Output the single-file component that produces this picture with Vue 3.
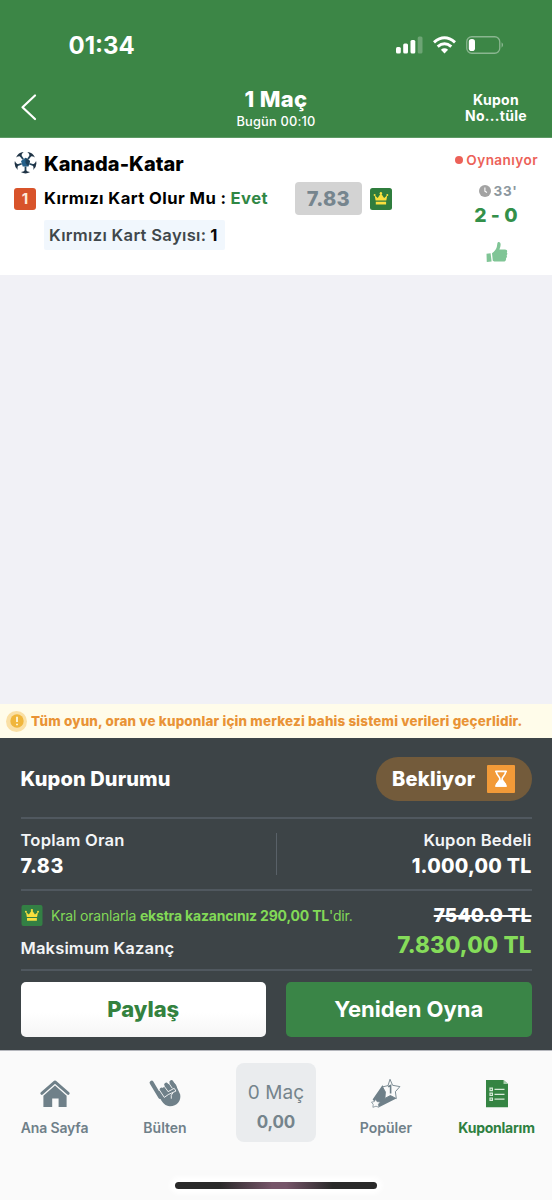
<script setup>
const tabs = [
  { id: 'home', label: 'Ana Sayfa' },
  { id: 'bulletin', label: 'Bülten' },
]
const ballArms = [0, 72, 144, 216, 288]
</script>

<template>
  <div class="app">
    <header class="top">
      <div class="status">
        <span class="time">01:34</span>
        <span class="signals">
          <svg width="27" height="18" viewBox="0 0 27 18" fill="#fff">
            <rect x="0" y="11" width="4.8" height="6.5" rx="1.5" />
            <rect x="7.2" y="7.5" width="4.8" height="10" rx="1.5" />
            <rect x="14.5" y="4" width="4.8" height="13.5" rx="1.5" />
            <rect x="21.7" y="0.5" width="4.8" height="17" rx="1.5" opacity=".25" />
          </svg>
          <svg width="23" height="18" viewBox="0 0 23 18" fill="none" stroke="#fff" stroke-width="3">
            <path d="M1 6.3Q11.5-2.9 22 6.3" />
            <path d="M4.7 10.6Q11.5 4.8 18.3 10.6" />
            <path d="M7.9 13.7Q11.5 10.9 15.1 13.7L11.5 17.4Z" fill="#fff" stroke="none" />
          </svg>
          <svg width="38" height="18" viewBox="0 0 38 18">
            <rect x=".75" y=".75" width="33" height="16.5" rx="5" fill="none" stroke="#fff" stroke-opacity=".4" stroke-width="1.3" />
            <rect x="2.8" y="3" width="6.2" height="12" rx="2.8" fill="#fff" />
            <path d="M35.6 6.3Q38.3 9 35.6 11.7Z" fill="#fff" opacity=".45" />
          </svg>
        </span>
      </div>
      <div class="bar">
        <svg class="back" width="18" height="28" viewBox="0 0 18 28" fill="none" stroke="#fff" stroke-width="2.2" stroke-linecap="round" stroke-linejoin="round">
          <path d="M15 2.5 2.5 14.2 15 26" />
        </svg>
        <div class="titles">
          <h1>1 Maç</h1>
          <p>Bugün 00:10</p>
        </div>
        <div class="coupon"><span>Kupon</span><span>No...tüle</span></div>
      </div>
    </header>

    <section class="match">
      <div class="left">
        <div class="teams">
          <svg width="23" height="23" viewBox="0 0 23 23">
            <path d="M11.5 6.8 16 10.1 14.3 15.4H8.7L7 10.1Z" fill="#24608a" />
            <path d="M11.5 6.8 16 10.1 14.3 15.4 11.5 12Z" fill="#1d3f58" />
            <g v-for="a in ballArms" :key="a" :transform="`rotate(${a + 36} 11.5 11.5)`">
              <path d="M11.5 7.5V2.4" stroke="#24445b" stroke-width="1.8" />
              <path d="M6.8 1.9Q11.5-1 16.2 1.9Q13.7 1.8 11.5 4Q9.3 1.8 6.8 1.9Z" fill="#1f3345" />
            </g>
          </svg>
          <h2>Kanada-Katar</h2>
        </div>
        <div class="pick">
          <span class="mbs">1</span>
          <span class="market">Kırmızı Kart Olur Mu :</span>
          <span class="evet">Evet</span>
          <span class="odd">7.83</span>
          <svg class="crown" width="22" height="22" viewBox="0 0 22 22">
            <rect width="22" height="22" rx="2.5" fill="#2f7d3d" />
            <path d="M5.6 12.6 4.6 7.3 7.7 10 10.9 5.3 14.1 10 17.3 7.3 16.3 12.6ZM5.8 13.7H16.1V16.5H5.8Z" fill="#f8df3e" />
            <g fill="#f8df3e"><circle cx="4.6" cy="7" r="1" /><circle cx="10.9" cy="5.3" r="1.2" /><circle cx="17.3" cy="7" r="1" /></g>
          </svg>
        </div>
        <div class="extra"><span>Kırmızı Kart Sayısı:</span><b>1</b></div>
      </div>
      <div class="live">
        <div class="state"><i></i><span>Oynanıyor</span></div>
        <div class="minute">
          <svg width="12" height="12" viewBox="0 0 12 12"><circle cx="6" cy="6" r="6" fill="#a3a3a3" /><path d="M5.9 2.4V6.2L8 7.5" fill="none" stroke="#fff" stroke-width="1.1" /></svg>
          <span>33'</span>
        </div>
        <div class="score">2 - 0</div>
        <svg class="thumb" width="22" height="22" viewBox="0 0 22 22" fill="#80c596">
          <path d="M.5 12.8 4.6 12.3 5.6 20.5.8 21Z" />
          <path d="M6 12.2C8.3 10.6 9.9 8.7 10.8 6L11.4 2.2C11.8.3 14.5.6 14.6 3.1 14.7 5.2 13.9 7 13.4 8.5H19C21 8.5 21.7 10.1 20.8 11.4 21.7 12.3 21.5 13.7 20.6 14.3 21.3 15.3 20.9 16.7 20 17.2 20.4 19.4 19.2 20.6 17.5 20.6H10C8.7 20.6 7.7 20.2 6.8 19.7Z" />
        </svg>
      </div>
    </section>

    <main class="blank"></main>

    <div class="notice">
      <span class="warn"><svg width="14" height="14" viewBox="0 0 14 14"><circle cx="7" cy="7" r="6.7" fill="#f0b63c" /><path d="M7 2.7V7.9M7 9.7V11.3" stroke="#fff8dc" stroke-width="1.8" /></svg></span>
      <span>Tüm oyun, oran ve kuponlar için merkezi bahis sistemi verileri geçerlidir.</span>
    </div>

    <section class="summary">
      <div class="row durum">
        <span class="h">Kupon Durumu</span>
        <span class="pill">
          <span>Bekliyor</span>
          <svg width="28" height="28" viewBox="0 0 28 28">
            <rect width="28" height="28" rx="1" fill="#f29a38" />
            <path d="M8.8 6.4H19.2M9.4 7C9.6 10.8 12.9 11.6 12.9 14S9.8 17.2 9.4 20.8H18.6C18.2 17.2 15.1 16.4 15.1 14S18.4 10.8 18.6 7" fill="none" stroke="#fff" stroke-width="1.7" stroke-linecap="round" />
            <path d="M14 13.3C13.8 16.3 8.6 16.8 8.2 21.7H19.8C19.4 16.8 14.2 16.3 14 13.3Z" fill="#fff" />
          </svg>
        </span>
      </div>
      <div class="row totals">
        <div class="cell"><span class="label">Toplam Oran</span><span class="value rate">7.83</span></div>
        <i class="split"></i>
        <div class="cell end"><span class="label">Kupon Bedeli</span><span class="value">1.000,00 TL</span></div>
      </div>
      <div class="row win">
        <div class="wleft">
          <div class="king">
            <svg width="22" height="21" viewBox="0 0 22 22">
              <rect width="22" height="22" rx="2" fill="#338044" />
              <path d="M5.6 12.6 4.6 7.3 7.7 10 10.9 5.3 14.1 10 17.3 7.3 16.3 12.6ZM5.8 13.7H16.1V16.5H5.8Z" fill="#f8df3e" />
              <g fill="#f8df3e"><circle cx="4.6" cy="7" r="1" /><circle cx="10.9" cy="5.3" r="1.2" /><circle cx="17.3" cy="7" r="1" /></g>
            </svg>
            <p>Kral oranlarla <b>ekstra kazancınız 290,00 TL</b>'dir.</p>
          </div>
          <span class="label max">Maksimum Kazanç</span>
        </div>
        <div class="wright"><span class="old">7540.0 TL</span><span class="new">7.830,00 TL</span></div>
      </div>
      <div class="actions">
        <button class="share">Paylaş</button>
        <button class="again">Yeniden Oyna</button>
      </div>
    </section>

    <nav class="tabs">
      <div class="items">
        <div v-for="t in tabs" :key="t.id" class="tab" :class="t.id">
          <svg v-if="t.id === 'home'" width="32" height="30" viewBox="0 0 32 30" fill="#6f8089">
            <path d="M2.8 15.4 16 3.9 29.2 15.4" fill="none" stroke="#6f8089" stroke-width="2.9" stroke-linejoin="round" stroke-linecap="round" />
            <path d="M16 7.6 27.6 17.8V29H19.6V20.5H13.2V29H4.4V17.8Z" />
          </svg>
          <svg v-else width="34" height="30" viewBox="0 0 34 30">
            <path d="M3.6 4.6 12.2 19" stroke="#6f8089" stroke-width="4" stroke-linecap="round" />
            <path d="M9.3 14.4 14 10.6 18.5 7 24 4.5C27 4.5 28.6 7 29.2 10L32.2 16.5C33.4 23 28.7 28.4 21.8 28.2 17.5 28 14.7 25.2 12.5 21Z" fill="#6f8089" />
            <g stroke="#6f8089" stroke-width="4" stroke-linecap="round"><path d="M13.6 11.6 17.4 16.4M18.2 6.6 22 12M23.4 4.2 26.2 8.5" /></g>
            <path d="M11.2 11.7 16.3 19.4 20.8 16.2M16.2 8.3 20.3 13.8M21.1 5.6 24.3 10.3M20.2 13.6 26.2 10.3 27.9 13.1 20.8 16.3M25.1 14.6Q22.3 16.8 23.3 20.7" fill="none" stroke="#fafafa" stroke-width=".9" />
          </svg>
          <span>{{ t.label }}</span>
        </div>
        <div class="slip"><span class="count">0 Maç</span><span class="sum">0,00</span></div>
        <div class="tab popular">
          <svg width="32" height="30" viewBox="0 0 32 30">
            <path d="M2.6 21.5 12.4 7.2 18 14 26.3 20.6 9.5 29Z" fill="#6f8089" />
            <path d="M20 1.3 22.6 7.3 29.9 8.6 25.4 13.7 26.3 20.6 20.4 17.5 14.9 20.4 15.4 14 12.6 8.9 18 7.6Z" fill="#fafafa" stroke="#6f8089" stroke-width=".9" />
            <path d="M18.2 8.8 20.6 7.5V15.4" fill="none" stroke="#6f8089" stroke-width="1.6" />
            <path d="M5.6 21.2 7 23.6 10.3 24.1 8.4 26.3 8.9 29.3 6 28.2 2.9 29.3 3.2 26.4 1.5 24.1 4.3 23.6Z" fill="#fafafa" stroke="#6f8089" stroke-width=".7" />
          </svg>
          <span>Popüler</span>
        </div>
        <div class="tab mine">
          <svg width="24" height="30" viewBox="0 0 24 30">
            <path d="M1 2H18.5L23 6V29.3H1Z" fill="#358443" />
            <path d="M18.5 2V6H23" fill="#a7cfad" />
            <g fill="none" stroke="#d8ead9" stroke-width="1.2"><path d="M5 10.2H7.4V12.6H5ZM5 15.1H7.4V17.5H5ZM5 20H7.4V22.4H5ZM9.5 11.4H19.5M9.5 16.3H19.5M9.5 21.2H19.5" /></g>
          </svg>
          <span>Kuponlarım</span>
        </div>
      </div>
      <i class="indicator"></i>
    </nav>
  </div>
</template>

<style>
body { margin: 0; background: #f1f1f6; }
</style>

<style scoped>
* { box-sizing: border-box; }
h1, h2, p { margin: 0; }
svg { display: block; flex: none; }
.app {
  display: flex; flex-direction: column; width: 552px; height: 1200px; overflow: hidden;
  font-family: Inter, "Noto Sans", sans-serif; background: #f1f1f6; white-space: nowrap;
}

.top { height: 138px; background: #3c8646; color: #fff; border-bottom: 1px solid #5d9a65; }
.status { height: 76px; padding: 14px 48px 0 68.5px; display: flex; align-items: center; justify-content: space-between; }
.time { font-size: 24px; font-weight: 700; }
.signals { display: flex; gap: 10px; }
.bar { display: grid; grid-template-columns: 160px 232px 1fr; height: 61px; }
.back { margin: 17px 0 0 20px; }
.titles { text-align: center; padding-top: 11px; }
.titles h1 { font-size: 22px; line-height: 24px; font-weight: 800; letter-spacing: .35px; }
.titles p { font-size: 12.8px; line-height: 22px; font-weight: 500; letter-spacing: .2px; }
.coupon { display: flex; flex-direction: column; align-items: center; width: 158px; padding: 16px 0 0 50px; }
.coupon span { font-size: 14px; line-height: 16px; font-weight: 700; letter-spacing: .3px; }

.match { height: 137px; background: #fff; display: flex; justify-content: space-between; }
.left { padding: 13px 0 0 14px; }
.teams { display: flex; align-items: center; gap: 7px; height: 24px; }
.teams svg { margin-top: -1px; }
.teams h2 { font-size: 20px; line-height: 24px; font-weight: 800; letter-spacing: .02px; padding-top: 1px; }
.pick { display: flex; align-items: center; height: 33px; margin-top: 7px; font-size: 16.6px; font-weight: 700; }
.mbs { width: 22px; height: 22px; border-radius: 3px; background: #d8532a; color: #ffe9d8; display: grid; place-items: center; font-size: 15px; }
.market { margin-left: 8px; letter-spacing: .42px; width: 186.5px; margin-top: -1px; }
.evet { color: #2f8744; letter-spacing: .45px; width: 64.5px; margin-top: -1px; }
.odd { width: 66.5px; height: 33px; border-radius: 4px; background: #d3d3d3; color: #76858e; display: grid; place-items: center; font-size: 20px; font-weight: 800; letter-spacing: .25px; }
.crown { margin-left: 8.5px; }
.extra { display: flex; align-items: center; margin: 5px 0 0 30px; width: 181px; height: 30px; padding-left: 5px; background: #f1f7fd; border-radius: 2px; font-size: 16.6px; font-weight: 600; color: #40474b; letter-spacing: .31px; }
.extra b { margin-left: 4px; color: #080808; font-weight: 700; }
.live { width: 112px; padding: 13px 14px 0 0; display: flex; flex-direction: column; align-items: center; }
.state { align-self: flex-end; display: flex; align-items: center; gap: 3px; height: 18px; color: #ec6158; font-size: 13.6px; font-weight: 600; letter-spacing: .42px; }
.state i { width: 8px; height: 8px; border-radius: 50%; background: #ec6158; }
.minute { display: flex; align-items: center; gap: 3px; height: 18px; margin-top: 13px; color: #8c979e; font-size: 13.5px; font-weight: 700; letter-spacing: .6px; padding-left: 18px; }
.score { margin-top: 3px; line-height: 24px; font-size: 19.3px; font-weight: 800; color: #33904a; letter-spacing: .1px; padding-left: 14px; }
.thumb { margin: 14px 0 0 15px; }

.blank { height: 429px; }

.notice { height: 34px; background: #fffcea; display: flex; align-items: center; gap: 4px; padding-left: 6px; color: #e99336; font-size: 13.4px; font-weight: 800; letter-spacing: .18px; }
.warn { width: 21px; height: 21px; border-radius: 50%; background: #fae0a5; display: grid; place-items: center; }

.summary { height: 312px; background: #3d4447; color: #fff; padding: 0 20.5px; }
.row { display: flex; border-bottom: 2px solid #50585f; }
.durum { height: 81px; align-items: center; justify-content: space-between; padding-top: 1px; }
.h { font-size: 20px; font-weight: 800; letter-spacing: .12px; margin-top: 2px; }
.pill { width: 155.5px; height: 44px; border-radius: 22px; background: #735b3b; display: flex; align-items: center; padding-left: 16px; font-size: 20px; font-weight: 800; letter-spacing: .27px; margin-top: 2px; }
.pill svg { margin-left: 11.5px; }
.totals { height: 72px; justify-content: space-between; padding-top: 9px; }
.cell { display: flex; flex-direction: column; width: 240px; }
.end { align-items: flex-end; }
.label { font-size: 16.6px; line-height: 24px; font-weight: 600; letter-spacing: .2px; color: #f3f5f7; }
.value { font-size: 19.6px; line-height: 29px; font-weight: 800; letter-spacing: .25px; }
.rate { letter-spacing: .5px; }
.split { width: 1px; height: 42px; margin-top: 5px; background: #596168; }
.win { height: 80px; justify-content: space-between; }
.king { display: flex; align-items: center; gap: 8.5px; height: 24px; margin-top: 12.5px; color: #82d957; font-size: 14px; letter-spacing: -.18px; }
.king b { font-weight: 700; }
.max { display: block; margin-top: 8px; letter-spacing: .12px; line-height: 24px; }
.wright { display: flex; flex-direction: column; align-items: flex-end; padding-top: 12px; }
.old { font-size: 19px; line-height: 26px; font-weight: 800; letter-spacing: .2px; text-decoration: line-through; text-decoration-thickness: 2px; }
.new { font-size: 22.3px; line-height: 32px; font-weight: 800; letter-spacing: .18px; color: #85dc5a; }
.actions { display: grid; grid-template-columns: 245.5px 245.5px; gap: 20px; padding-top: 10.5px; }
.actions button { height: 55px; border: 0; padding: 0; border-radius: 5px; font-family: inherit; font-size: 22px; }
.share { background: linear-gradient(#fff 55%, #f5f5f5); color: #34823f; font-weight: 800; }
.again { background: #3a8547; color: #fff; font-weight: 700; }

.tabs { height: 150px; background: #fafafa; border-top: 1px solid #b5b7bd; display: flex; flex-direction: column; align-items: center; }
.items { display: grid; grid-template-columns: 109px 112px 110px 110px 111px; width: 552px; height: 131px; justify-items: center; }
.tab { display: flex; flex-direction: column; align-items: center; padding-top: 27px; color: #6f8089; font-size: 14px; font-weight: 600; letter-spacing: 0; }
.tab span { margin-top: 10px; line-height: 20px; }
.home { letter-spacing: -.15px; }
.mine { color: #2e8040; font-weight: 700; letter-spacing: -.24px; }
.slip { width: 80px; height: 79px; margin-top: 12px; border-radius: 8px; background: #eaecee; display: flex; flex-direction: column; align-items: center; color: #75848c; padding-top: 16px; }
.count { font-size: 19px; line-height: 28px; font-weight: 400; letter-spacing: .1px; }
.sum { font-size: 17px; line-height: 30px; font-weight: 700; letter-spacing: -.2px; }
.indicator { width: 202px; height: 7px; border-radius: 4px; background: linear-gradient(90deg, #292929 22%, #765569 48%, #765569 55%, #292929 78%); box-shadow: 0 0 5px 5px #fff; }
</style>
